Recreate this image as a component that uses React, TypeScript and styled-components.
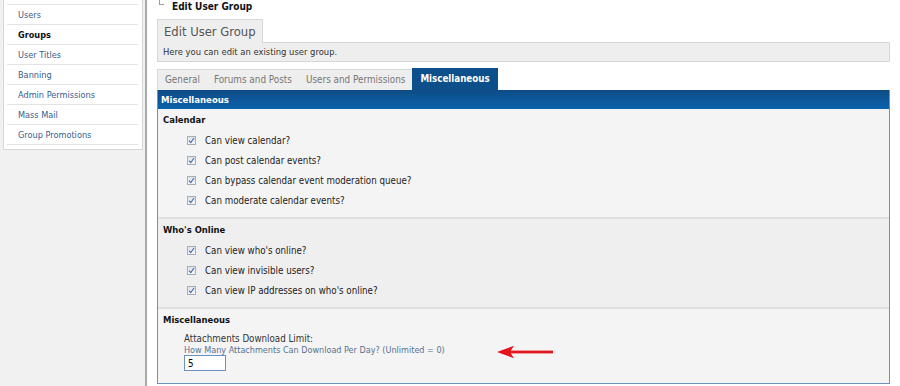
import React from "react";
import styled, { createGlobalStyle } from "styled-components";

const FONT = `"DejaVu Sans Condensed", "DejaVu Sans", Verdana, sans-serif`;

const GlobalStyle = createGlobalStyle`
  html, body { margin: 0; padding: 0; background: #fff; }
  body { font-family: ${FONT}; color: #222; }
  * { box-sizing: border-box; }
`;

const Layout = styled.div`
  display: flex;
  height: 100vh;
  overflow: hidden;
`;

const Sidebar = styled.aside`
  flex: none;
  width: 147px;
  background: #f1f1f1;
  border-right: 2px solid #a9a9a9;
`;

const NavBox = styled.nav`
  margin-left: 3px;
  width: 140px;
  background: #fff;
  border: 1px solid #d6d6d6;
  border-top: none;
  padding: 4px 4px 4px 3px;
`;

const NavItem = styled.div<{ $active?: boolean }>`
  height: 20px;
  line-height: 21px;
  padding-left: 11px;
  font-size: 9.1px;
  border-bottom: 1px solid #e3e3e3;
  color: ${(p) => (p.$active ? "#111" : "#36608f")};
  font-weight: ${(p) => (p.$active ? "bold" : "normal")};
  &:first-child {
    border-top: 1px solid #e3e3e3;
    height: 21px;
  }
`;

const Main = styled.main`
  flex: 1;
  min-width: 0;
  padding: 0 10px;
  background: #fff;
`;

const Breadcrumb = styled.div`
  display: flex;
  align-items: flex-start;
  height: 13px;
  padding-left: 2px;
  margin-bottom: 6px;
  font-size: 10px;
  line-height: 13px;
  font-weight: bold;
  color: #111;
`;

const Elbow = styled.span`
  flex: none;
  width: 5px;
  height: 5px;
  margin-right: 8px;
  border-left: 1px solid #9c9c9c;
  border-bottom: 1px solid #9c9c9c;
`;

const HeaderRow = styled.div`
  display: flex;
  align-items: flex-end;
`;

const HeaderTab = styled.div`
  height: 24px;
  padding: 0 6px;
  background: #eeeeee;
  border: 1px solid #d7d7d7;
  border-bottom: none;
  font-size: 12.9px;
  line-height: 23px;
  color: #555;
`;

const HeaderFiller = styled.div`
  flex: 1;
  border-bottom: 1px solid #d7d7d7;
`;

const DescBar = styled.div`
  height: 19px;
  padding-left: 5px;
  background: #eeeeee;
  border: 1px solid #d7d7d7;
  border-top: none;
  font-size: 9.35px;
  line-height: 18px;
  color: #333;
`;

const TabsRow = styled.div`
  display: flex;
  align-items: flex-end;
  margin-top: 6px;
`;

const Tab = styled.div<{ $active?: boolean }>`
  height: ${(p) => (p.$active ? "22px" : "21px")};
  padding: 0 ${(p) => (p.$active ? "8px" : "7px")};
  font-size: ${(p) => (p.$active ? "9.7px" : "9.85px")};
  line-height: ${(p) => (p.$active ? "22px" : "20px")};
  background: ${(p) => (p.$active ? "#0d4f8b" : "#eeeeee")};
  color: ${(p) => (p.$active ? "#fff" : "#777")};
  font-weight: ${(p) => (p.$active ? "bold" : "normal")};
  border-top: ${(p) => (p.$active ? "none" : "1px solid #d8d8d8")};
  &:first-child {
    border-left: 1px solid #d8d8d8;
  }
`;

const Panel = styled.section`
  border: 1px solid #6b93bb;
  border-top: none;
  background: #f4f4f4;
`;

const PanelHeader = styled.div`
  height: 19px;
  padding-left: 3px;
  background: linear-gradient(#0e4c85, #0a62ac);
  color: #fff;
  font-size: 9.5px;
  font-weight: bold;
  line-height: 19px;
`;

const Section = styled.div<{ $bg: string; $last?: boolean }>`
  position: relative;
  padding: 1px 5px ${(p) => (p.$last ? "12px" : "7px")};
  background: ${(p) => p.$bg};
  border-bottom: ${(p) => (p.$last ? "none" : "2px solid #dfdfdf")};
`;

const SectionTitle = styled.div`
  font-size: 9.4px;
  font-weight: bold;
  line-height: 20px;
  color: #111;
`;

const CheckRow = styled.label`
  display: flex;
  align-items: center;
  gap: 9px;
  height: 20px;
  padding-left: 24px;
  font-size: 9.7px;
  color: #222;
`;

const Box = styled.span`
  flex: none;
  display: flex;
  align-items: center;
  justify-content: center;
  width: 9px;
  height: 9px;
  border: 1px solid #a3aebd;
  background: linear-gradient(#dfe5ec, #f5f7fa);
`;

const Field = styled.div`
  padding-left: 21px;
  padding-top: 3px;
`;

const FieldLabel = styled.div`
  font-size: 9.7px;
  line-height: 12px;
  color: #333;
`;

const FieldHint = styled.div`
  font-size: 9px;
  line-height: 10px;
  color: #587290;
`;

const NumberInput = styled.input`
  display: block;
  width: 42px;
  height: 16px;
  margin: 0;
  padding: 0 3px;
  border: 1px solid #6a92c0;
  background: #fff;
  font-family: ${FONT};
  font-size: 9.7px;
  color: #000;
  outline: none;
`;

const Arrow = styled.svg`
  position: absolute;
  left: 339px;
  top: 36px;
`;

const Check = () => (
  <Box>
    <svg width="7" height="7" viewBox="0 0 7 7">
      <path d="M1 3.6 L2.8 5.6 L6 1" fill="none" stroke="#4467a6" strokeWidth="1.1" />
    </svg>
  </Box>
);

const navItems = ["Users", "Groups", "User Titles", "Banning", "Admin Permissions", "Mass Mail", "Group Promotions"];
const tabs = ["General", "Forums and Posts", "Users and Permissions", "Miscellaneous"];

const sections = [
  {
    title: "Calendar",
    bg: "#f4f4f4",
    items: [
      "Can view calendar?",
      "Can post calendar events?",
      "Can bypass calendar event moderation queue?",
      "Can moderate calendar events?",
    ],
  },
  {
    title: "Who's Online",
    bg: "#efefef",
    items: ["Can view who's online?", "Can view invisible users?", "Can view IP addresses on who's online?"],
  },
];

export default function App() {
  return (
    <>
      <GlobalStyle />
      <Layout>
        <Sidebar>
          <NavBox>
            {navItems.map((n) => (
              <NavItem key={n} $active={n === "Groups"}>
                {n}
              </NavItem>
            ))}
          </NavBox>
        </Sidebar>
        <Main>
          <Breadcrumb>
            <Elbow />
            Edit User Group
          </Breadcrumb>
          <HeaderRow>
            <HeaderTab>Edit User Group</HeaderTab>
            <HeaderFiller />
          </HeaderRow>
          <DescBar>Here you can edit an existing user group.</DescBar>
          <TabsRow>
            {tabs.map((t) => (
              <Tab key={t} $active={t === "Miscellaneous"}>
                {t}
              </Tab>
            ))}
          </TabsRow>
          <Panel>
            <PanelHeader>Miscellaneous</PanelHeader>
            {sections.map((s) => (
              <Section key={s.title} $bg={s.bg}>
                <SectionTitle>{s.title}</SectionTitle>
                {s.items.map((i) => (
                  <CheckRow key={i}>
                    <Check />
                    {i}
                  </CheckRow>
                ))}
              </Section>
            ))}
            <Section $bg="#f4f4f4" $last>
              <SectionTitle>Miscellaneous</SectionTitle>
              <Field>
                <FieldLabel>Attachments Download Limit:</FieldLabel>
                <FieldHint>How Many Attachments Can Download Per Day? (Unlimited = 0)</FieldHint>
                <NumberInput defaultValue="5" readOnly />
              </Field>
              <Arrow width="57" height="14" viewBox="0 0 57 14">
                <path d="M0 7 L17 0.8 L13 7 L17 13.2 Z" fill="#e3141b" />
                <rect x="12" y="5.6" width="44" height="2.8" fill="#e3141b" />
              </Arrow>
            </Section>
          </Panel>
        </Main>
      </Layout>
    </>
  );
}
